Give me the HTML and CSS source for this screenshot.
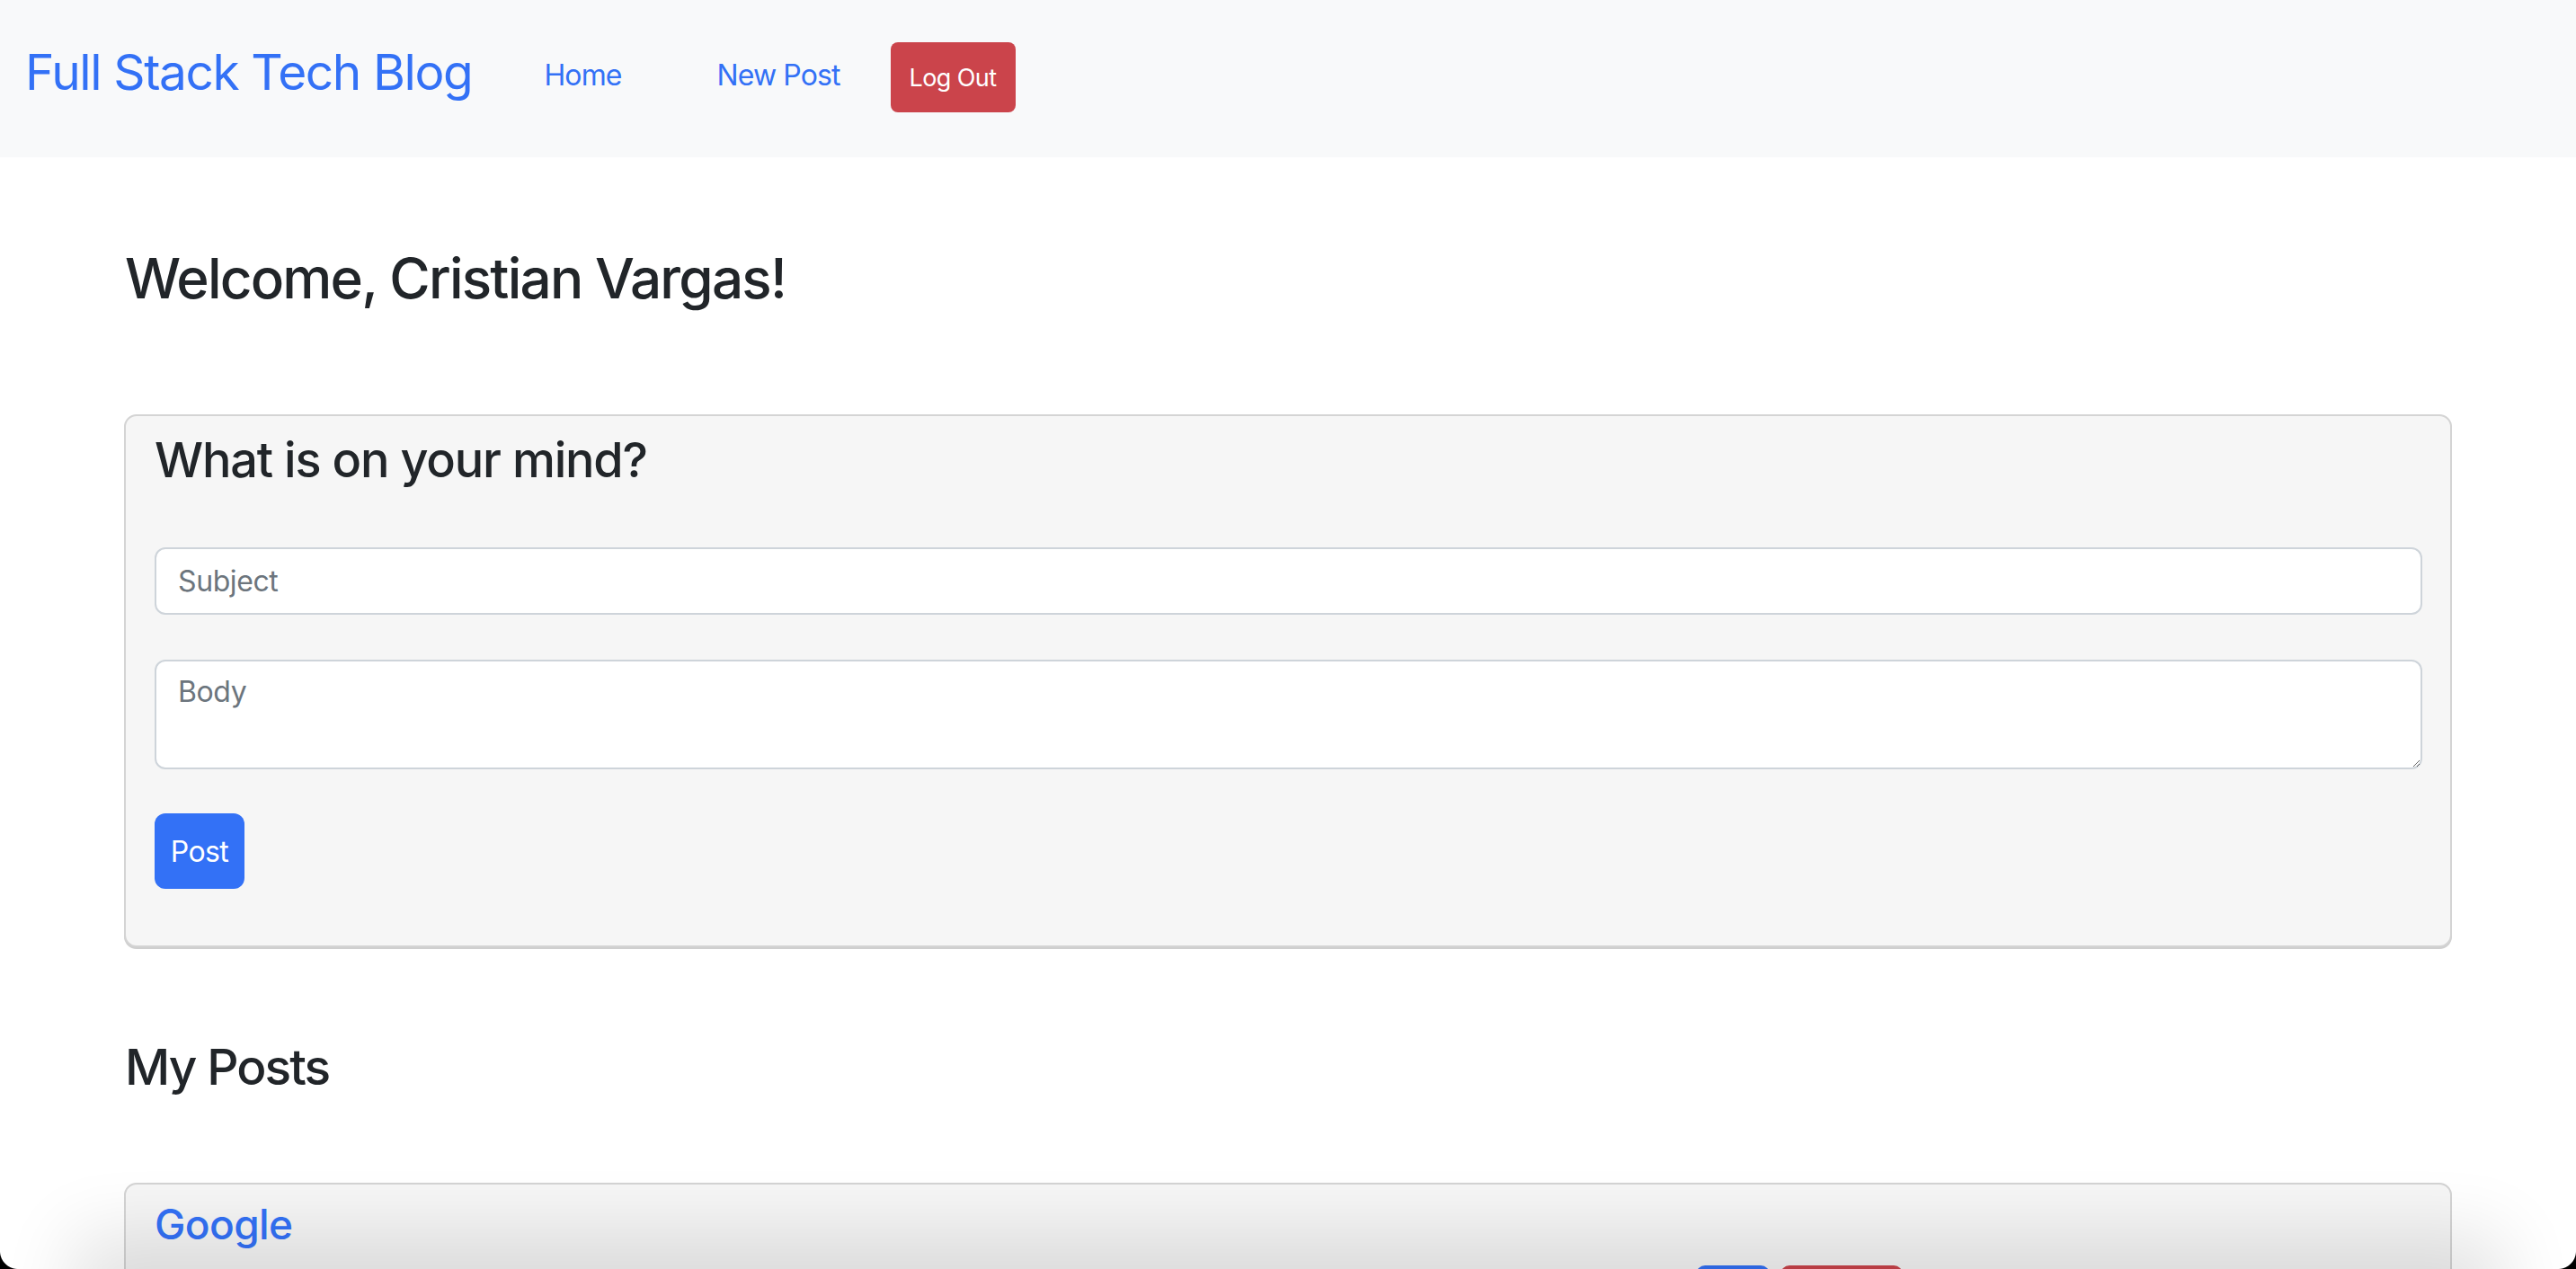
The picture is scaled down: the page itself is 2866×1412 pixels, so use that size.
FILE: index.html
```html
<!DOCTYPE html>
<html lang="en">
<head>
<meta charset="utf-8">
<title>Full Stack Tech Blog</title>
<link rel="stylesheet" href="styles.css">
</head>
<body>
<nav class="navbar">
  <a class="brand" href="#">Full Stack Tech Blog</a>
  <a class="nav-link home" href="#">Home</a>
  <a class="nav-link newpost" href="#">New Post</a>
  <button class="btn btn-danger logout">Log Out</button>
</nav>

<main class="container">
  <h2 class="welcome">Welcome, Cristian Vargas!</h2>

  <section class="card new-post">
    <h3 class="card-title">What is on your mind?</h3>
    <input class="form-control subject" type="text" placeholder="Subject">
    <textarea class="form-control body" placeholder="Body"></textarea>
    <button class="btn btn-primary post">Post</button>
  </section>

  <h3 class="section-title">My Posts</h3>

  <section class="card post-card">
    <h4 class="post-title"><a href="#">Google</a></h4>
    <div class="post-actions">
      <button class="btn btn-primary small edit" aria-label="Edit"></button>
      <button class="btn btn-danger small del" aria-label="Delete"></button>
    </div>
  </section>
</main>

<div class="bottom-shadow"></div>
<div class="corner corner-left"></div>
<div class="corner corner-right"></div>
</body>
</html>
```

FILE: styles.css
```css
* { box-sizing: border-box; }

html, body {
  margin: 0;
  padding: 0;
  height: 100%;
  overflow: hidden;
  background: #ffffff;
  font-family: Inter, "Liberation Sans", sans-serif;
  color: #212529;
}

a { text-decoration: none; color: #3371f6; }

.navbar {
  height: 175px;
  background: #f8f9fa;
  display: flex;
  align-items: center;
  padding-left: 28px;
}

.brand {
  font-size: 55px;
  line-height: 1.2;
  margin-right: 80px;
  margin-top: -16px;
  letter-spacing: -1.4px;
}

.nav-link {
  font-size: 32px;
  line-height: 1.2;
  letter-spacing: -0.9px;
  margin-top: -6px;
}

.home { margin-right: 106px; }
.newpost { margin-right: 56px; }

.btn {
  border: none;
  font-family: inherit;
  color: #ffffff;
  cursor: pointer;
}

.btn-danger { background: #cb444b; }
.btn-primary { background: #3371f6; }

.logout {
  width: 139px;
  height: 78px;
  border-radius: 8px;
  font-size: 27px;
  letter-spacing: -0.6px;
  margin-top: -3px;
}

.container {
  width: 2590px;
  margin: 0 auto;
}

.welcome {
  font-size: 62px;
  font-weight: 500;
  line-height: 1.2;
  margin: 98px 0 114px 1px;
  letter-spacing: -1.8px;
}

.card {
  background: #f6f6f6;
  border: 2px solid #d4d4d4;
  border-radius: 14px;
  box-shadow: 0 2px 0 #cfcfcf;
}

.new-post {
  padding: 17px 31px 63px 32px;
  display: flex;
  flex-direction: column;
  align-items: flex-start;
}

.card-title {
  font-size: 54px;
  font-weight: 500;
  line-height: 1.2;
  margin: 0 0 64px 0;
  letter-spacing: -1.2px;
}

.form-control {
  width: 100%;
  background: #ffffff;
  border: 2px solid #ced4da;
  border-radius: 12px;
  font-family: inherit;
  font-size: 32px;
  color: #212529;
  padding: 14px 24px;
  letter-spacing: -0.4px;
}

.form-control::placeholder { color: #6c757d; }

.subject {
  height: 75px;
  margin-bottom: 50px;
}

.body {
  height: 122px;
  margin-bottom: 49px;
  resize: vertical;
  display: block;
}

.post {
  width: 100px;
  height: 84px;
  border-radius: 12px;
  font-size: 32px;
  letter-spacing: -0.6px;
}

.section-title {
  font-size: 55px;
  font-weight: 500;
  line-height: 1.2;
  margin: 100px 0 96px 1px;
  letter-spacing: -1.9px;
}

.post-card {
  padding: 17px 32px 40px 32px;
}

.post-title {
  font-size: 46px;
  font-weight: 500;
  line-height: 1.2;
  margin: 0 0 18px 0;
  letter-spacing: -0.6px;
}

.post-actions {
  display: flex;
  gap: 12px;
  padding-left: 1715px;
}

.small {
  height: 70px;
  border-radius: 10px;
  font-size: 28px;
}

.edit { width: 82px; }
.del { width: 136px; }

.bottom-shadow {
  position: fixed;
  left: 120px;
  right: 120px;
  bottom: -120px;
  height: 120px;
  box-shadow: 0 0 80px 40px rgba(0, 0, 0, 0.11);
  pointer-events: none;
}

.corner {
  position: fixed;
  bottom: 0;
  width: 20px;
  height: 20px;
}

.corner-left {
  left: 0;
  background: radial-gradient(circle at 100% 0, transparent 19.5px, #000 20.5px);
}

.corner-right {
  right: 0;
  background: radial-gradient(circle at 0 0, transparent 19.5px, #000 20.5px);
}
```
